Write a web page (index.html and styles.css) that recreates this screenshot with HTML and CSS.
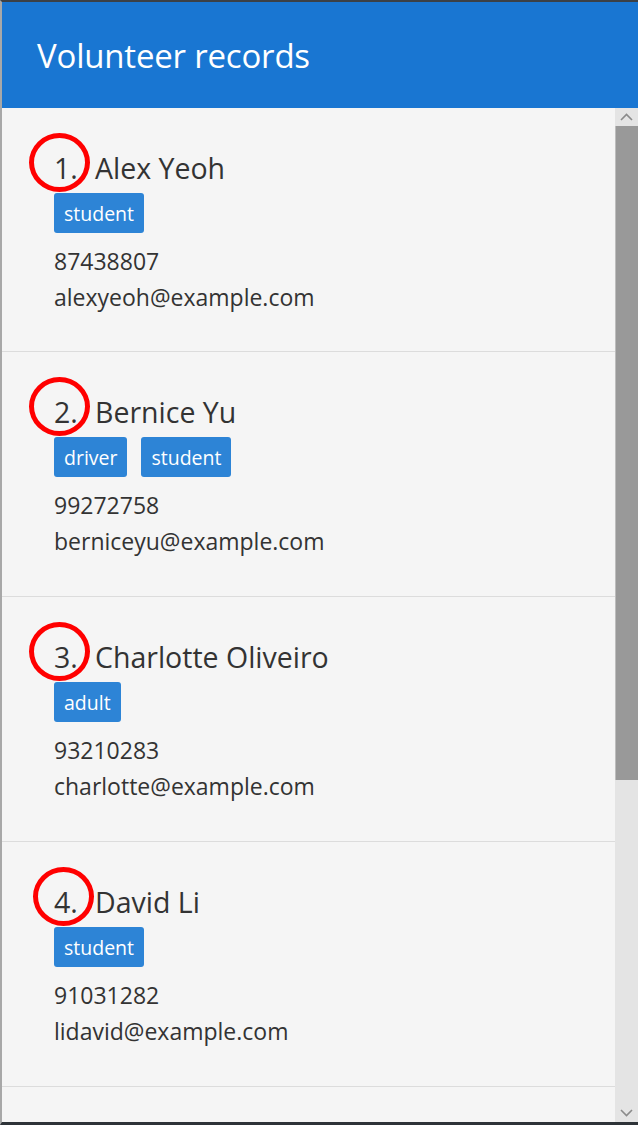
FILE: index.html
```html
<!DOCTYPE html>
<html>
<head>
<meta charset="utf-8">
<link rel="stylesheet" href="styles.css">
</head>
<body>
<div class="window">
  <header class="appbar"><h1 class="title">Volunteer records</h1></header>
  <div class="body">
    <div class="list">
      <div class="card">
        <span class="mark"></span>
        <div class="name"><span class="num">1.</span>Alex Yeoh</div>
        <div class="tags"><span class="tag">student</span></div>
        <div class="line">87438807</div>
        <div class="line">alexyeoh@example.com</div>
      </div>
      <div class="card">
        <span class="mark"></span>
        <div class="name"><span class="num">2.</span>Bernice Yu</div>
        <div class="tags"><span class="tag">driver</span><span class="tag">student</span></div>
        <div class="line">99272758</div>
        <div class="line">berniceyu@example.com</div>
      </div>
      <div class="card">
        <span class="mark"></span>
        <div class="name"><span class="num">3.</span>Charlotte Oliveiro</div>
        <div class="tags"><span class="tag">adult</span></div>
        <div class="line">93210283</div>
        <div class="line">charlotte@example.com</div>
      </div>
      <div class="card">
        <span class="mark mark4"></span>
        <div class="name"><span class="num">4.</span>David Li</div>
        <div class="tags"><span class="tag">student</span></div>
        <div class="line">91031282</div>
        <div class="line">lidavid@example.com</div>
      </div>
      <div class="card card-partial"></div>
    </div>
    <div class="scrollbar">
      <div class="arrow"><svg width="23" height="18" viewBox="0 0 23 18"><path d="M6 12 L11.5 6.5 L17 12" fill="none" stroke="#8a8a8a" stroke-width="1.6"/></svg></div>
      <div class="track"><div class="thumb"></div></div>
      <div class="arrow"><svg width="23" height="18" viewBox="0 0 23 18"><path d="M6 6 L11.5 11.5 L17 6" fill="none" stroke="#8a8a8a" stroke-width="1.6"/></svg></div>
    </div>
  </div>
</div>
</body>
</html>
```
FILE: styles.css
```css
html, body {
  margin: 0;
  padding: 0;
  background: #f5f5f5;
}
.window {
  width: 638px;
  height: 1125px;
  box-sizing: border-box;
  border-top: 2px solid #3b4046;
  border-bottom: 3px solid #2e3338;
  border-left: 2px solid #a8a8a8;
  display: flex;
  flex-direction: column;
  font-family: "Open Sans", "Noto Sans", sans-serif;
  color: #333333;
  overflow: hidden;
}
.appbar {
  height: 106px;
  background: #1976d2;
  display: flex;
  align-items: center;
  padding-left: 35px;
  flex: none;
}
.title {
  margin: 0;
  font-weight: 400;
  font-size: 33px;
  color: #ffffff;
  letter-spacing: -0.2px;
}
.body {
  flex: 1;
  display: flex;
  min-height: 0;
}
.list {
  flex: 1;
  min-width: 0;
  background: #f5f5f5;
  overflow: hidden;
}
.card {
  position: relative;
  height: 244px;
  box-sizing: border-box;
  border-bottom: 1px solid #dcdcdc;
  padding: 42px 0 0 52px;
}
.card + .card { height: 245px; }
.name {
  font-size: 28.5px;
  line-height: 36px;
  height: 36px;
  white-space: nowrap;
}
.num { display: inline-block; width: 41px; }
.tags {
  display: flex;
  gap: 14px;
  margin-top: 7px;
}
.tag {
  background: #2d84d6;
  color: #ffffff;
  font-size: 19.5px;
  line-height: 42px;
  height: 40px;
  padding: 0 10px;
  border-radius: 3px;
  overflow: hidden;
}
.line {
  font-size: 23px;
  line-height: 36px;
}
.tags + .line { margin-top: 10px; }
.mark {
  position: absolute;
  left: 27px;
  top: 25px;
  width: 51px;
  height: 49px;
  border: 5px solid #ff0000;
  border-radius: 50%;
}
.mark4 { left: 31px; top: 25px; }
.scrollbar {
  width: 23px;
  flex: none;
  background: #e4e4e4;
  display: flex;
  flex-direction: column;
}
.arrow { height: 18px; display: flex; }
.track { flex: 1; }
.thumb {
  height: 654px;
  background: #999999;
  border-left: 1px solid #bdbdbd;
}
```
